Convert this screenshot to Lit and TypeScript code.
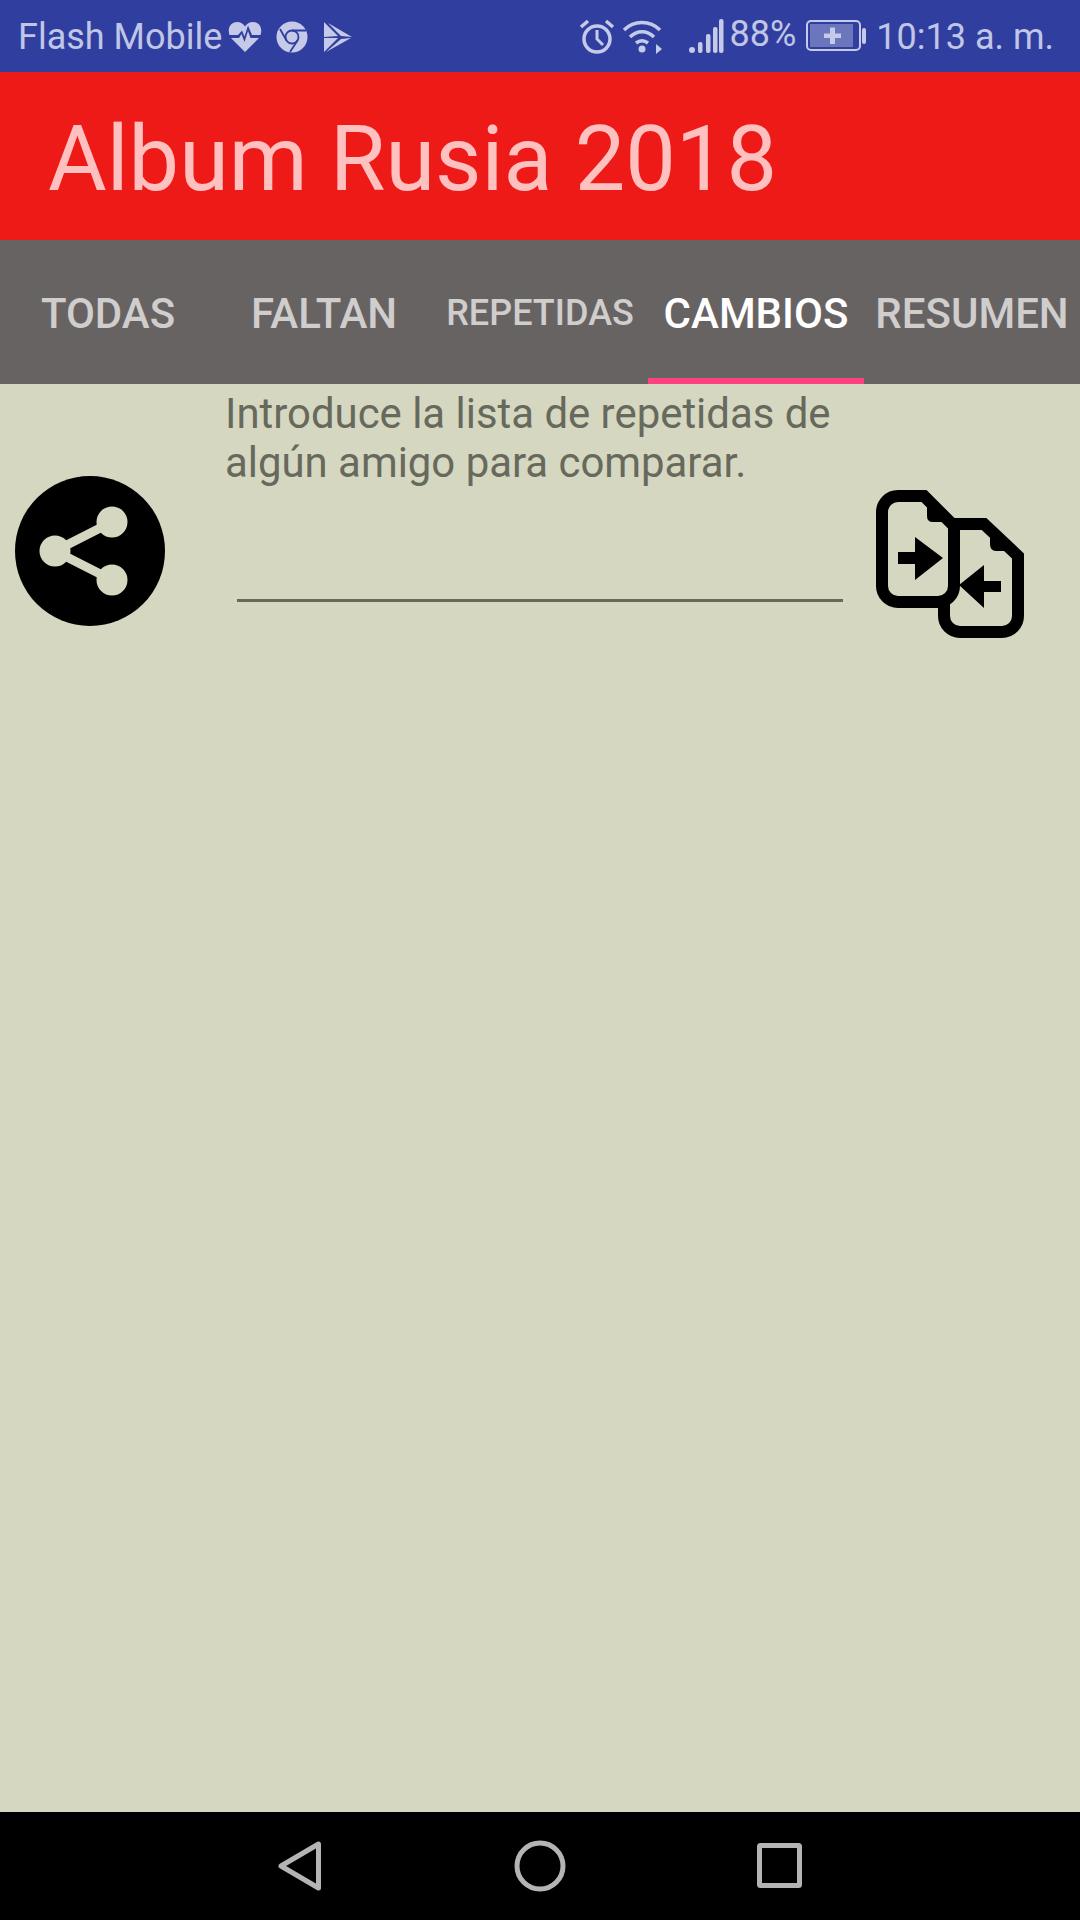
import { LitElement, html, css } from 'lit'
import { customElement, state } from 'lit/decorators.js'
import { classMap } from 'lit/directives/class-map.js'

const TABS = [
  { label: 'TODAS' },
  { label: 'FALTAN' },
  { label: 'REPETIDAS', small: true },
  { label: 'CAMBIOS' },
  { label: 'RESUMEN' }
]

@customElement('app-root')
export class AppRoot extends LitElement {
  @state() active = 3

  static styles = css`
    :host {
      display: flex;
      flex-direction: column;
      width: 1080px;
      height: 1920px;
      background: #d5d7c0;
      font-family: Roboto, "Liberation Sans", sans-serif;
    }

    .status {
      display: flex;
      align-items: center;
      justify-content: space-between;
      height: 72px;
      padding: 2px 26px 0 18px;
      box-sizing: border-box;
      background: #303f9f;
      color: #c0c6e6;
      font-size: 36px;
    }

    .group {
      display: flex;
      align-items: center;
    }

    .status svg {
      display: block;
      fill: #c5cae9;
    }

    .toolbar {
      display: flex;
      align-items: center;
      height: 168px;
      padding: 6px 0 0 48px;
      box-sizing: border-box;
      background: #ee1a18;
      color: #ffc0c0;
      font-size: 90px;
    }

    .tabs {
      display: flex;
      height: 144px;
      background: #686363;
    }

    .tab {
      flex: 1;
      display: flex;
      align-items: center;
      justify-content: center;
      padding-top: 8px;
      box-sizing: border-box;
      border-bottom: 6px solid transparent;
      color: #d0cdcd;
      font-size: 42px;
      font-weight: 500;
      white-space: nowrap;
      cursor: pointer;
    }

    .tab.small {
      font-size: 36px;
    }

    .tab.active {
      color: #fff;
      border-bottom-color: #ff4081;
    }

    .main {
      flex: 1;
      display: flex;
      align-items: flex-start;
    }

    .share {
      flex: none;
      width: 150px;
      height: 150px;
      margin: 92px 60px 0 15px;
    }

    .form {
      flex: none;
      width: 622px;
      padding-top: 5px;
    }

    .hint {
      margin: 0;
      color: #66695c;
      font-size: 41.900px;
      line-height: 49px;
    }

    input {
      display: block;
      box-sizing: border-box;
      width: 606px;
      height: 115px;
      margin: 0 0 0 12px;
      padding: 0;
      border: 0;
      border-bottom: 3px solid #666a58;
      background: transparent;
      outline: none;
      font: inherit;
      font-size: 42px;
    }

    .swap {
      flex: none;
      width: 180px;
      height: 180px;
      margin: 86px 0 0 3px;
    }

    .nav {
      display: flex;
      height: 108px;
      background: #000;
    }

    .nav svg {
      display: block;
      width: 1080px;
      height: 108px;
      fill: none;
      stroke: #b4b4b4;
      stroke-width: 5;
      stroke-linejoin: round;
    }
  `

  render() {
    return html`
      <div class="status">
        <div class="group">
          <span>Flash Mobile</span>
          <svg width="34" height="32" viewBox="0 0 34 32" style="margin-left:6px">
            <path d="M17 31 L3 17 H11 L13.5 13 L16.5 21 L20 10 L22.5 17 H31 Z" />
            <path d="M1.5 14 C-1 7 3 1 9 1 C12.5 1 15.5 3 17 5.5 C18.5 3 21.500 1 25 1 C31 1 35 7 32.500 14 H24 L20 4.500 L16.500 15.500 L14 9.500 L10 14 Z" />
          </svg>
          <svg width="32" height="32" viewBox="0 0 32 32" style="margin-left:14px">
            <circle cx="16" cy="16" r="15.500" />
            <g fill="none" stroke="#303f9f" stroke-width="1.800">
              <circle cx="16" cy="16" r="6.500" />
              <path d="M16 9.500 H30 M10.500 19.500 L4 8 M21.500 19.500 L14 31" />
            </g>
          </svg>
          <svg width="30" height="32" viewBox="0 0 30 32" style="margin-left:15px">
            <path d="M1 1 L15 15 L1 16 Z M1 17 L15 17 L1 31 Z M5 2 L29 16 L18 15 Z M18 18 L28 17 L3 31 Z" />
          </svg>
        </div>
        <div class="group">
          <svg width="36" height="36" viewBox="0 0 36 36">
            <circle cx="18" cy="20" r="13" fill="none" stroke="#c5cae9" stroke-width="3.500" />
            <path d="M18 11 V20 L24 26" fill="none" stroke="#c5cae9" stroke-width="3" />
            <path d="M2 8 L9 2 M34 8 L27 2" fill="none" stroke="#c5cae9" stroke-width="3.500" />
          </svg>
          <svg width="42" height="36" viewBox="0 0 42 36" style="margin-left:7px">
            <path d="M2 11 C12 1 28 1 38 11 M8 18 C15 11 25 11 32 18 M14 24 C18 21 22 21 26 24" fill="none" stroke="#c5cae9" stroke-width="3.500" />
            <circle cx="20" cy="30" r="3.500" />
            <path d="M34 25 L40 30 L34 35 Z" />
          </svg>
          <svg width="36" height="36" viewBox="0 0 36 36" style="margin:-2px 0 0 24px">
            <path d="M4 35 a3 3 0 0 1 -3 -3 a3 3 0 0 1 6 0 a3 3 0 0 1 -3 3 Z" />
            <rect x="10" y="24" width="4.500" height="11" rx="2" />
            <rect x="18" y="16" width="4.500" height="19" rx="2" />
            <rect x="25" y="9" width="4.500" height="26" rx="2" />
            <rect x="31" y="1" width="4.500" height="34" rx="2" />
          </svg>
          <span style="margin:-6px 0 0 6px">88%</span>
          <svg width="62" height="32" viewBox="0 0 62 32" style="margin:-2px 0 0 10px">
            <rect x="1" y="1" width="53" height="29" rx="4" fill="none" stroke="#c5cae9" stroke-width="2" />
            <rect x="4" y="4" width="43" height="23" fill="#c5cae9" opacity="0.4" />
            <path d="M18 13.500 H24 V7.500 H29 V13.500 H35 V18 H29 V24 H24 V18 H18 Z" />
            <rect x="56" y="8" width="4" height="16" rx="2" />
          </svg>
          <span style="margin-left:8px">10:13 a. m.</span>
        </div>
      </div>

      <div class="toolbar">Album Rusia 2018</div>

      <div class="tabs">
        ${TABS.map((t, i) => html`
          <div
            class=${classMap({ tab: true, small: !!t.small, active: i === this.active })}
            @click=${() => { this.active = i }}
          >${t.label}</div>
        `)}
      </div>

      <div class="main">
        <svg class="share" viewBox="0 0 150 150">
          <circle cx="75" cy="75" r="75" fill="#000" />
          <path d="M97 46 L40 75 L97 104" fill="none" stroke="#d5d7c0" stroke-width="9" />
          <circle cx="97" cy="46" r="15.500" fill="#d5d7c0" />
          <circle cx="40" cy="75" r="15.500" fill="#d5d7c0" />
          <circle cx="97" cy="104" r="15.500" fill="#d5d7c0" />
        </svg>

        <div class="form">
          <p class="hint">Introduce la lista de repetidas de algún amigo para comparar.</p>
          <input type="text" aria-label="Lista de repetidas" />
        </div>

        <svg class="swap" viewBox="0 0 180 180">
          <g fill="none" stroke="#000" stroke-width="12">
            <path d="M48 26 H74 L104 56 V116 A16 16 0 0 1 88 132 H48 A16 16 0 0 1 32 116 V42 A16 16 0 0 1 48 26 Z" />
            <path d="M104 54 H134 L168 86 V146 A16 16 0 0 1 152 162 H110 A16 16 0 0 1 94 146 V132" />
          </g>
          <path d="M72 26 H77 V46 Q77 52 83 52 H100 L104 60 Z" />
          <path d="M134 54 H140 V74 Q140 81 146 81 H163 L168 88 Z" />
          <path d="M48 82 H65 V67 L93 88 L65 110 V94 H48 Z" />
          <path d="M151 111 H134 V95 L109 115 L134 138 V122 H151 Z" />
        </svg>
      </div>

      <div class="nav">
        <svg viewBox="0 0 1080 108">
          <path d="M281 54 L318.500 32 V76 Z" />
          <circle cx="540" cy="54" r="23" />
          <rect x="759.500" y="33.500" width="40" height="40" rx="1" />
        </svg>
      </div>
    `
  }
}
